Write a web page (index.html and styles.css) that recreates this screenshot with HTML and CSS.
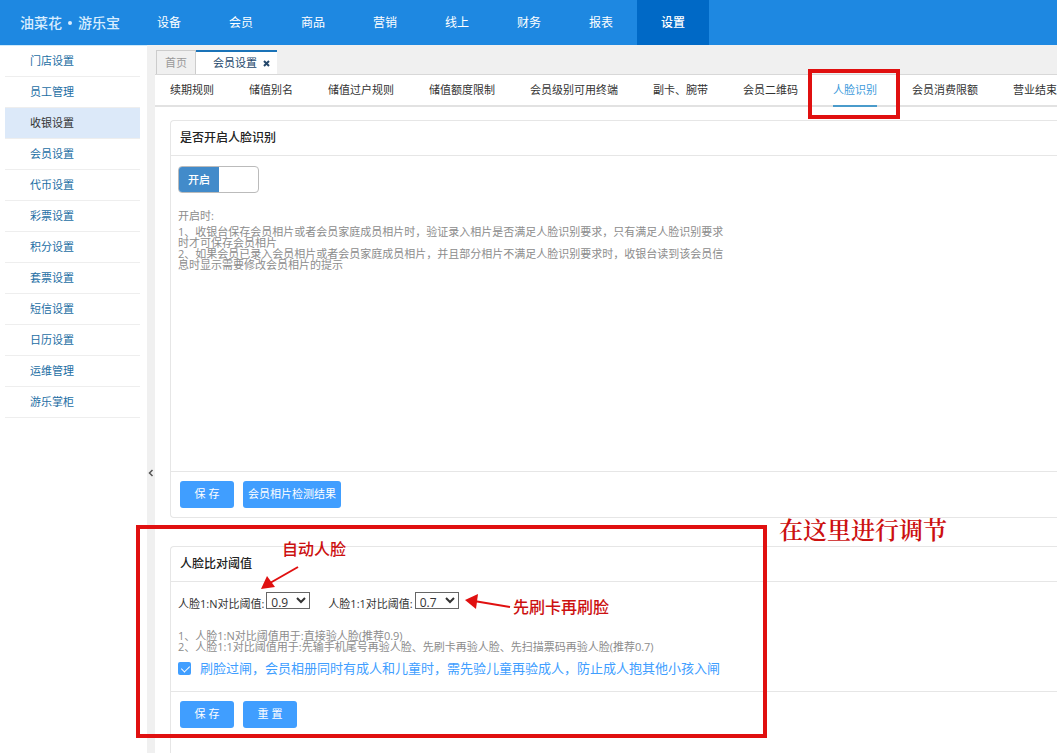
FILE: index.html
```html
<!DOCTYPE html>
<html lang="zh-CN">
<head>
<meta charset="utf-8">
<title>会员设置</title>
<link rel="stylesheet" href="styles.css">
</head>
<body>
<header class="topbar">
  <div class="logo"><span>油菜花</span><i class="logo-dot"></i><span>游乐宝</span></div>
  <nav class="topnav">
    <a href="#">设备</a><a href="#">会员</a><a href="#">商品</a><a href="#">营销</a><a href="#">线上</a><a href="#">财务</a><a href="#">报表</a><a href="#" class="active">设置</a>
  </nav>
</header>
<div class="layout">
  <nav class="sidebar">
    <a href="#">门店设置</a>
    <a href="#">员工管理</a>
    <a href="#" class="active">收银设置</a>
    <a href="#">会员设置</a>
    <a href="#">代币设置</a>
    <a href="#">彩票设置</a>
    <a href="#">积分设置</a>
    <a href="#">套票设置</a>
    <a href="#">短信设置</a>
    <a href="#">日历设置</a>
    <a href="#">运维管理</a>
    <a href="#">游乐掌柜</a>
  </nav>
  <button class="splitter" aria-label="收起菜单"><svg width="6" height="8" viewBox="0 0 6 8"><path d="M4.5 1 1.5 4l3 3" fill="none" stroke="#555" stroke-width="1.5"/></svg></button>
  <main class="content">
    <div class="page-tabs">
      <a href="#" class="page-tab">首页</a>
      <div class="page-tab current">会员设置<button class="close" aria-label="关闭"><svg width="7" height="7" viewBox="0 0 7 7"><path d="M1 1l5 5M6 1 1 6" stroke="#24476b" stroke-width="2"/></svg></button></div>
    </div>
    <nav class="subtabs">
      <a href="#">续期规则</a><a href="#">储值别名</a><a href="#">储值过户规则</a><a href="#">储值额度限制</a><a href="#">会员级别可用终端</a><a href="#">副卡、腕带</a><a href="#">会员二维码</a><a href="#" class="active">人脸识别</a><a href="#">会员消费限额</a><a href="#">营业结束查询</a>
    </nav>
    <div class="panels">
      <section class="panel">
        <h2>是否开启人脸识别</h2>
        <div class="panel-body enable-body">
          <button class="switch" role="switch" aria-checked="true"><span>开启</span></button>
          <p class="help-title">开启时:</p>
          <p class="help">1、收银台保存会员相片或者会员家庭成员相片时，验证录入相片是否满足人脸识别要求，只有满足人脸识别要求<br>时才可保存会员相片<br>2、如果会员已录入会员相片或者会员家庭成员相片，并且部分相片不满足人脸识别要求时，收银台读到该会员信<br>息时显示需要修改会员相片的提示</p>
        </div>
        <div class="panel-foot">
          <button class="btn">保 存</button><button class="btn">会员相片检测结果</button>
        </div>
      </section>
      <section class="panel open">
        <h2>人脸比对阈值</h2>
        <div class="panel-body match-body">
          <div class="thresholds">
            <div class="field"><label for="t1n">人脸1:N对比阈值:</label><select id="t1n"><option>0.9</option></select></div>
            <div class="field"><label for="t11">人脸1:1对比阈值:</label><select id="t11"><option>0.7</option></select></div>
          </div>
          <p class="help">1、人脸1:N对比阈值用于:直接验人脸(推荐0.9)<br>2、人脸1:1对比阈值用于:先输手机尾号再验人脸、先刷卡再验人脸、先扫描票码再验人脸(推荐0.7)</p>
          <div class="check"><input type="checkbox" id="gate" checked><label for="gate">刷脸过闸，会员相册同时有成人和儿童时，需先验儿童再验成人，防止成人抱其他小孩入闸</label></div>
        </div>
        <div class="panel-foot">
          <button class="btn">保 存</button><button class="btn">重 置</button>
        </div>
      </section>
    </div>
  </main>
</div>
<div class="mark mark-tab"></div>
<div class="mark mark-panel"></div>
<svg class="arrow arrow-auto" width="40" height="26" viewBox="0 0 40 26"><path d="M38 2 10 18" stroke="#e01010" stroke-width="2"/><path d="M1 24 7 11l8 11z" fill="#e01010"/></svg>
<svg class="arrow arrow-card" width="48" height="18" viewBox="0 0 48 18"><path d="M46 14 10 8" stroke="#e01010" stroke-width="2"/><path d="M1 7 14 1l-2 15z" fill="#e01010"/></svg>
<p class="note note-auto">自动人脸</p>
<p class="note note-card">先刷卡再刷脸</p>
<p class="note note-adjust">在这里进行调节</p>
</body>
</html>
```
FILE: styles.css
```css
* { box-sizing: border-box; }
body {
  margin: 0;
  height: 100vh;
  overflow: hidden;
  position: relative;
  display: flex;
  flex-direction: column;
  background: #fff;
  color: #333;
  font: 11px/16px "Open Sans", "Noto Sans CJK SC", sans-serif;
}
a { color: inherit; text-decoration: none; white-space: nowrap; }
p, h2 { margin: 0; }
button, select { font: inherit; }
button { padding: 0; border: 0; cursor: pointer; white-space: nowrap; }

.topbar { flex: none; display: flex; height: 45px; background: #1e88e1; color: #fff; }
.logo { width: 133px; padding-left: 20px; display: flex; align-items: center; gap: 6px; font-size: 14px; font-weight: 500; color: #d8edff; }
.logo-dot { width: 4px; height: 4px; border-radius: 50%; background: #d8edff; }
.topnav { display: flex; font-size: 12px; line-height: 45px; }
.topnav a { width: 72px; text-align: center; }
.topnav .active { background: #0069c6; font-weight: 500; }

.layout { flex: 1; min-height: 0; display: flex; }
.sidebar { flex: none; width: 147px; padding: 0 7px 0 5px; border-top: 1px solid #cfeafa; color: #1c6ea4; }
.sidebar a { display: block; padding-left: 25px; line-height: 30px; border-bottom: 1px solid #eee; }
.sidebar .active { background: #dce9f9; color: #333; }
.splitter { flex: none; width: 8px; padding-top: 424px; display: flex; justify-content: center; align-items: flex-start; background: #f0f0f0; }

.content { flex: 1; min-width: 0; overflow: hidden; display: flex; flex-direction: column; }
.page-tabs { flex: none; display: flex; align-items: flex-end; height: 30px; padding-left: 1px; background: #f0f0f0; border-bottom: 1px solid #d8d8d8; }
.page-tab { height: 24px; width: 40px; text-align: center; line-height: 24px; border: 1px solid #ccc; border-bottom: 0; color: #999; }
.page-tab.current { width: 81px; height: 24px; display: flex; align-items: center; justify-content: flex-end; gap: 6px; padding-right: 7px; background: #fff; border: 0; border-top: 2px solid #1a73b8; color: #24476b; }
.close { display: flex; background: none; }
.subtabs { flex: none; display: flex; gap: 35px; height: 32px; padding-left: 15px; border-bottom: 2px solid #e2e2e2; line-height: 30px; }
.subtabs a { height: 32px; }
.subtabs .active { color: #3d9bdc; border-bottom: 2px solid #4a9bcb; }

.panels { display: flex; flex-direction: column; gap: 28px; padding: 13px 0 0 15px; }
.panel { border: 1px solid #e6e6e6; border-right: 0; border-radius: 4px 0 0 4px; }
.panel.open { border-bottom: 0; padding-bottom: 40px; border-radius: 4px 0 0 0; }
h2 { padding-left: 9px; font-size: 12px; line-height: 34px; font-weight: 500; color: #222; border-bottom: 1px solid #e6e6e6; }
.panel-body { padding-left: 7px; }
.enable-body { height: 315px; padding-top: 10px; }
.switch { display: block; width: 81px; height: 27px; border: 1px solid #bbb; border-radius: 4px; background: #fff; overflow: hidden; }
.switch span { display: block; width: 40px; line-height: 25px; background: #428bca; color: #fff; font-weight: 500; }
.help-title { margin-top: 15px; color: #8c8c8c; }
.help { line-height: 11px; color: #8c8c8c; white-space: nowrap; }
.help-title + .help { margin-top: 2px; }
.panel-foot { display: flex; gap: 9px; padding: 9px; border-top: 1px solid #e6e6e6; }
.btn { min-width: 54px; height: 27px; padding: 0 5px 1px; border-radius: 3px; background: #409eff; color: #fff; }

.match-body { height: 109px; padding-top: 10px; }
.thresholds { display: flex; gap: 18px; }
.field { display: flex; gap: 2px; align-items: flex-start; white-space: nowrap; }
.field label { padding-top: 4px; }
.field select { width: 44px; height: 17px; padding: 0; background: #fff; border: 1px solid #666; border-radius: 0; color: #333; font-size: 12px; line-height: 15px; }
.thresholds + .help { margin-top: 18px; }
.check { display: flex; align-items: center; gap: 9px; margin-top: 6px; font-size: 13px; line-height: 20px; color: #409eff; white-space: nowrap; }
.check input { appearance: none; position: relative; width: 13px; height: 13px; margin: 0; border-radius: 2px; background: #409eff; }
.check input:checked::after { content: ""; position: absolute; left: 5px; top: 2px; width: 4px; height: 7px; border: solid #fff; border-width: 0 1px 1px 0; transform: rotate(45deg); }

/* annotations drawn over the page */
.mark { position: absolute; border: 4px solid #e01010; pointer-events: none; }
.mark-tab { left: 808px; top: 69px; width: 92px; height: 50px; }
.mark-panel { left: 136px; top: 525px; width: 631px; height: 213px; }
.arrow { position: absolute; }
.arrow-auto { left: 260px; top: 565px; }
.arrow-card { left: 464px; top: 593px; }
.note { position: absolute; white-space: nowrap; color: #cc1010; font-size: 16px; line-height: 20px; font-weight: 500; }
.note-auto { left: 282px; top: 539px; }
.note-card { left: 513px; top: 597px; }
.note-adjust { left: 779px; top: 517px; font: 600 24px/28px "Liberation Serif", "Noto Serif CJK SC", "Noto Sans CJK SC", serif; }
```
